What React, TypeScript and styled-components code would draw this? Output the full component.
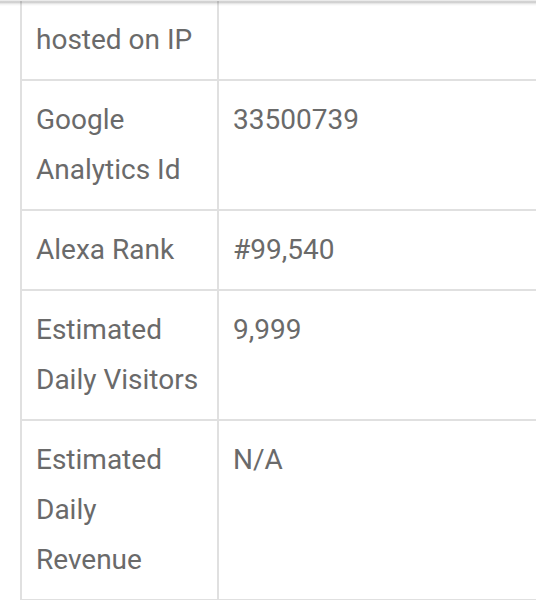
import React from "react";
import styled, { createGlobalStyle } from "styled-components";

const GlobalStyle = createGlobalStyle`
  html, body {
    margin: 0;
    padding: 0;
    background: #fff;
    overflow: hidden;
  }
  body {
    font-family: Roboto, "Noto Sans", Arial, sans-serif;
  }
`;

const Page = styled.div`
  position: relative;
  width: 536px;
  height: 600px;
  overflow: hidden;
  background: #fff;
`;

const TopShadow = styled.div`
  position: absolute;
  top: 0;
  left: 0;
  right: 0;
  height: 6px;
  background: linear-gradient(
    to bottom,
    rgba(0, 0, 0, 0.04) 0px,
    rgba(0, 0, 0, 0.22) 2px,
    rgba(0, 0, 0, 0.06) 4px,
    rgba(0, 0, 0, 0) 6px
  );
`;

const Table = styled.table`
  margin: 1px 0 0 20px;
  width: 560px;
  table-layout: fixed;
  border-collapse: collapse;
  border-left: 2px solid #e0e0e0;
  color: #6a6a6a;
  font-size: 28px;
  line-height: 50px;
`;

const LabelCol = styled.col`
  width: 197px;
`;

const Row = styled.tr`
  border-bottom: 2px solid #e0e0e0;
`;

const Cell = styled.td<{ $label?: boolean }>`
  vertical-align: top;
  padding: 14px 14px;
  border-right: ${(p) => (p.$label ? "2px solid #e0e0e0" : "none")};
`;

const rows: [string, string][] = [
  ["hosted on IP", ""],
  ["Google Analytics Id", "33500739"],
  ["Alexa Rank", "#99,540"],
  ["Estimated Daily Visitors", "9,999"],
  ["Estimated Daily Revenue", "N/A"],
];

export default function App() {
  return (
    <Page>
      <GlobalStyle />
      <Table>
        <colgroup>
          <LabelCol />
          <col />
        </colgroup>
        <tbody>
          {rows.map(([label, value]) => (
            <Row key={label}>
              <Cell $label>{label}</Cell>
              <Cell>{value}</Cell>
            </Row>
          ))}
        </tbody>
      </Table>
      <TopShadow />
    </Page>
  );
}
